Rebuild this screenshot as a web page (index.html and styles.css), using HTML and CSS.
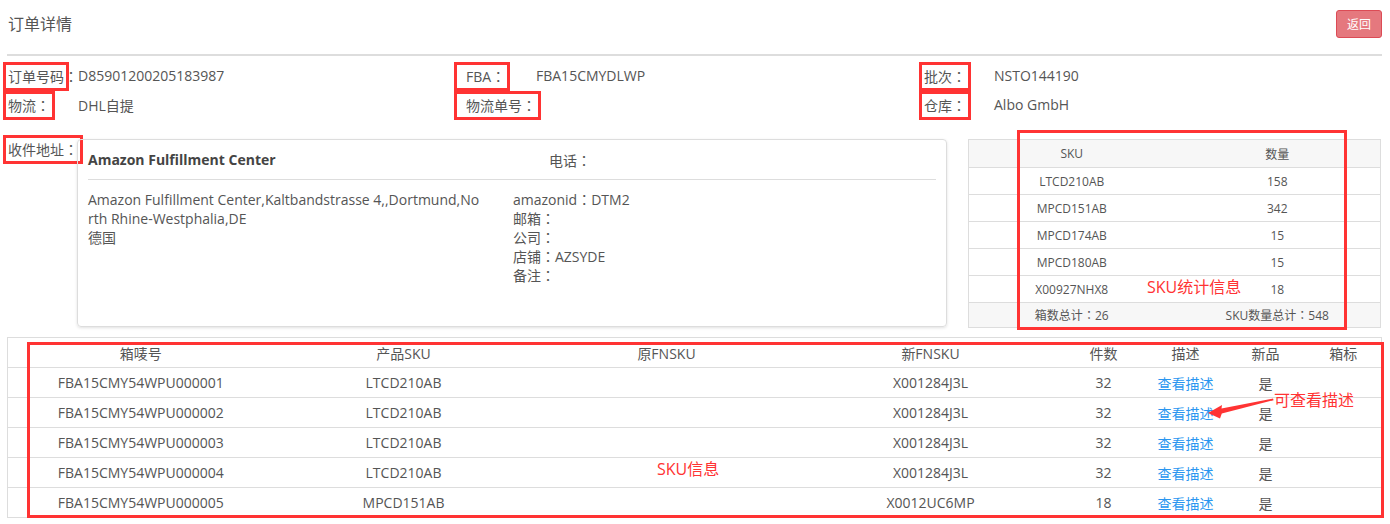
FILE: index.html
```html
<!DOCTYPE html>
<html lang="zh-CN">
<head>
    <meta charset="UTF-8">
    <title>订单详情</title>
    <link rel="stylesheet" href="styles.css">
</head>
<body>
<div class="page">
    <div class="page-head">
        <h3 class="title">订单详情</h3>
        <button class="btn-back">返回</button>
    </div>

    <div class="info">
        <div class="info-item"><span class="label"><span class="mark">订单号码</span><span class="colon" lang="zh-TW">：</span></span><span class="value">D85901200205183987</span></div>
        <div class="info-item"><span class="label"><span class="mark pad">FBA<span class="colon" lang="zh-TW">：</span></span></span><span class="value">FBA15CMYDLWP</span></div>
        <div class="info-item"><span class="label"><span class="mark">批次<span class="colon" lang="zh-TW">：</span></span></span><span class="value">NSTO144190</span></div>
        <div class="info-item"><span class="label"><span class="mark">物流<span class="colon" lang="zh-TW">：</span></span></span><span class="value">DHL自提</span></div>
        <div class="info-item"><span class="label"><span class="mark pad">物流单号<span class="colon" lang="zh-TW">：</span></span></span><span class="value"></span></div>
        <div class="info-item"><span class="label"><span class="mark">仓库<span class="colon" lang="zh-TW">：</span></span></span><span class="value">Albo GmbH</span></div>
    </div>

    <div class="addr-row">
        <div class="label addr-label"><span class="mark">收件地址<span class="colon" lang="zh-TW">：</span></span></div>
        <div class="card">
            <div class="card-head">
                <div class="card-title">Amazon Fulfillment Center</div>
                <div class="card-phone">电话<span class="colon" lang="zh-TW">：</span></div>
            </div>
            <div class="card-body">
                <div class="addr-text">
                    <div>Amazon Fulfillment Center,Kaltbandstrasse 4,,Dortmund,North Rhine-Westphalia,DE</div>
                    <div>德国</div>
                </div>
                <div class="addr-extra">
                    <div>amazonid<span class="colon" lang="zh-TW">：</span>DTM2</div>
                    <div>邮箱<span class="colon" lang="zh-TW">：</span></div>
                    <div>公司<span class="colon" lang="zh-TW">：</span></div>
                    <div>店铺<span class="colon" lang="zh-TW">：</span>AZSYDE</div>
                    <div>备注<span class="colon" lang="zh-TW">：</span></div>
                </div>
            </div>
        </div>
        <table class="sku-table">
            <thead>
                <tr><th>SKU</th><th>数量</th></tr>
            </thead>
            <tbody>
                <tr><td>LTCD210AB</td><td>158</td></tr>
                <tr><td>MPCD151AB</td><td>342</td></tr>
                <tr><td>MPCD174AB</td><td>15</td></tr>
                <tr><td>MPCD180AB</td><td>15</td></tr>
                <tr><td>X00927NHX8</td><td>18</td></tr>
            </tbody>
            <tfoot>
                <tr><td>箱数总计<span class="colon" lang="zh-TW">：</span>26</td><td>SKU数量总计<span class="colon" lang="zh-TW">：</span>548</td></tr>
            </tfoot>
        </table>
    </div>

    <table class="box-table">
        <colgroup>
            <col style="width: 266px"><col style="width: 260px"><col style="width: 266px"><col style="width: 262px">
            <col style="width: 84px"><col style="width: 80px"><col style="width: 80px"><col>
        </colgroup>
        <thead>
            <tr><th>箱唛号</th><th>产品SKU</th><th>原FNSKU</th><th>新FNSKU</th><th>件数</th><th>描述</th><th>新品</th><th>箱标</th></tr>
        </thead>
        <tbody>
            <tr><td>FBA15CMY54WPU000001</td><td>LTCD210AB</td><td></td><td>X001284J3L</td><td>32</td><td><a href="#">查看描述</a></td><td>是</td><td></td></tr>
            <tr><td>FBA15CMY54WPU000002</td><td>LTCD210AB</td><td></td><td>X001284J3L</td><td>32</td><td><a href="#">查看描述</a></td><td>是</td><td></td></tr>
            <tr><td>FBA15CMY54WPU000003</td><td>LTCD210AB</td><td></td><td>X001284J3L</td><td>32</td><td><a href="#">查看描述</a></td><td>是</td><td></td></tr>
            <tr><td>FBA15CMY54WPU000004</td><td>LTCD210AB</td><td></td><td>X001284J3L</td><td>32</td><td><a href="#">查看描述</a></td><td>是</td><td></td></tr>
            <tr><td>FBA15CMY54WPU000005</td><td>MPCD151AB</td><td></td><td>X0012UC6MP</td><td>18</td><td><a href="#">查看描述</a></td><td>是</td><td></td></tr>
        </tbody>
    </table>

    <!-- annotations drawn over the screenshot -->
    <div class="note-box note-sku"></div>
    <div class="note-text note-sku-text">SKU统计信息</div>
    <div class="note-box note-table"></div>
    <div class="note-text note-table-text">SKU信息</div>
    <div class="note-text note-desc-text">可查看描述</div>
    <svg class="note-arrow" width="80" height="28" viewBox="0 0 80 28">
        <polygon points="8,18 22,10 21.5,13.5 73,3.6 73.6,5.2 21.8,18.6 20,23.5" fill="#f33"/>
    </svg>
</div>
</body>
</html>
```

FILE: styles.css
```css
* {
    box-sizing: border-box;
}
body {
    margin: 0;
    font-family: "Open Sans", "Noto Sans CJK SC", sans-serif;
    font-size: 14px;
    color: #555;
    background: #fff;
}
.page {
    position: relative;
    padding: 0 8px 0 7px;
}
.colon {
    font-family: "Noto Sans CJK TC", sans-serif;
}
.page-head {
    display: flex;
    justify-content: space-between;
    align-items: center;
    padding: 10px 0 16px;
    border-bottom: 2px solid #ddd;
}
.title {
    margin: 0;
    padding-left: 1px;
    font-size: 16px;
    font-weight: normal;
    line-height: 28px;
}
.btn-back {
    width: 46px;
    height: 28px;
    padding: 0;
    border: 1px solid #dc4b55;
    border-radius: 3px;
    background: #e5787e;
    color: #fff;
    font-family: inherit;
    font-size: 12px;
}

.info {
    display: grid;
    grid-template-columns: repeat(3, 1fr);
    margin-top: 5px;
    padding-left: 1px;
}
.info-item {
    display: flex;
    height: 29px;
    align-items: center;
    white-space: nowrap;
}
.label {
    width: 70px;
    flex: none;
    white-space: nowrap;
}
.mark {
    outline: 3px solid #f33;
    outline-offset: 2px;
}
.mark.pad {
    padding-left: 7px;
    margin-left: -7px;
}

.addr-row {
    display: flex;
    align-items: flex-start;
    margin-top: 20px;
}
.addr-label {
    padding-left: 1px;
    line-height: 20px;
}
.card {
    width: 870px;
    height: 188px;
    border: 1px solid #ddd;
    border-radius: 4px;
    box-shadow: 0 1px 3px rgba(0, 0, 0, 0.12);
}
.card-head {
    display: grid;
    grid-template-columns: 425px 1fr;
    align-items: center;
    height: 40px;
    margin: 0 10px;
    border-bottom: 1px solid #ddd;
}
.card-title {
    font-weight: bold;
    color: #444;
}
.card-phone {
    padding-left: 36px;
}
.card-body {
    display: grid;
    grid-template-columns: 425px 1fr;
    padding: 10px 10px 0;
    line-height: 19px;
}
.addr-text {
    padding-right: 31px;
    word-break: break-all;
}

.sku-table {
    width: 413px;
    margin-left: 21px;
    border-collapse: collapse;
    border: 1px solid #ddd;
    font-size: 12px;
    text-align: center;
}
.sku-table th {
    height: 28px;
    font-weight: normal;
    background: #f7f7f7;
    border-bottom: 1px solid #ddd;
}
.sku-table td {
    width: 50%;
    height: 27px;
    border-bottom: 1px solid #ddd;
}
.sku-table tfoot td {
    height: 25px;
    background: #f7f7f7;
}

.box-table {
    width: 100%;
    margin-top: 9px;
    table-layout: fixed;
    border-collapse: collapse;
    border: 1px solid #ddd;
    text-align: center;
}
.box-table th,
.box-table td {
    height: 30px;
    padding: 0;
    font-weight: normal;
    border-bottom: 1px solid #ddd;
}
.box-table a {
    color: #2a96f0;
    text-decoration: none;
}

.note-box {
    position: absolute;
    border: 3px solid #f33;
}
.note-sku {
    left: 1017px;
    top: 130px;
    width: 330px;
    height: 200px;
}
.note-table {
    left: 27px;
    top: 342px;
    width: 1357px;
    height: 176px;
}
.note-text {
    position: absolute;
    color: #f33;
    font-size: 16px;
    line-height: 22px;
}
.note-sku-text {
    left: 1147px;
    top: 276px;
}
.note-table-text {
    left: 657px;
    top: 458px;
}
.note-desc-text {
    left: 1274px;
    top: 389px;
}
.note-arrow {
    position: absolute;
    left: 1200px;
    top: 395px;
}
```
